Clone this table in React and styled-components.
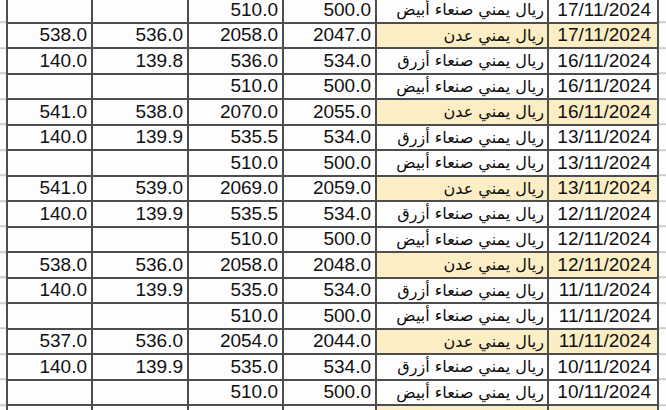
import React from "react";
import styled, { createGlobalStyle } from "styled-components";

const GlobalStyle = createGlobalStyle`
  html, body {
    margin: 0;
    padding: 0;
    width: 666px;
    height: 410px;
    overflow: hidden;
    background-color: #fdfdfd;
    background-image: repeating-linear-gradient(
      to bottom,
      transparent 0,
      transparent 23.5px,
      #cfcfcf 23.5px,
      #cfcfcf 25.5px
    );
    background-position: 0 -1.8px;
  }
`;

const Page = styled.div`
  padding-left: 6px;
  margin-top: -3.8px;
`;

const Sheet = styled.div`
  display: grid;
  grid-template-columns: 83px 94px 93px 91px 170px 108px;
  grid-auto-rows: 23.5px;
  gap: 2px;
  padding: 2px;
  width: max-content;
  background: #4d4d4d;
`;

const Cell = styled.div`
  display: flex;
  align-items: center;
  justify-content: flex-end;
  padding-right: ${(p) => p.$pad || 4}px;
  background: ${(p) => (p.$yellow ? "#fbedc4" : "#fdfdfd")};
  color: #111;
  font-family: "Liberation Sans", Arial, sans-serif;
  font-size: 19px;
  white-space: nowrap;
  overflow: hidden;
`;

const NameCell = styled(Cell)`
  direction: rtl;
  justify-content: flex-start;
  padding-right: 3px;
  font-family: "DejaVu Sans", sans-serif;
  font-size: 16px;
  color: #0c0c0c;
`;

const WHITE = "ريال يمني صنعاء أبيض";
const ADEN = "ريال يمني عدن";
const BLUE = "ريال يمني صنعاء أزرق";

const rows = [
  { date: "17/11/2024", name: WHITE, d: "500.0", c: "510.0" },
  { date: "17/11/2024", name: ADEN, d: "2047.0", c: "2058.0", b: "536.0", a: "538.0" },
  { date: "16/11/2024", name: BLUE, d: "534.0", c: "536.0", b: "139.8", a: "140.0" },
  { date: "16/11/2024", name: WHITE, d: "500.0", c: "510.0" },
  { date: "16/11/2024", name: ADEN, d: "2055.0", c: "2070.0", b: "538.0", a: "541.0" },
  { date: "13/11/2024", name: BLUE, d: "534.0", c: "535.5", b: "139.9", a: "140.0" },
  { date: "13/11/2024", name: WHITE, d: "500.0", c: "510.0" },
  { date: "13/11/2024", name: ADEN, d: "2059.0", c: "2069.0", b: "539.0", a: "541.0" },
  { date: "12/11/2024", name: BLUE, d: "534.0", c: "535.5", b: "139.9", a: "140.0" },
  { date: "12/11/2024", name: WHITE, d: "500.0", c: "510.0" },
  { date: "12/11/2024", name: ADEN, d: "2048.0", c: "2058.0", b: "536.0", a: "538.0" },
  { date: "11/11/2024", name: BLUE, d: "534.0", c: "535.0", b: "139.9", a: "140.0" },
  { date: "11/11/2024", name: WHITE, d: "500.0", c: "510.0" },
  { date: "11/11/2024", name: ADEN, d: "2044.0", c: "2054.0", b: "536.0", a: "537.0" },
  { date: "10/11/2024", name: BLUE, d: "534.0", c: "535.0", b: "139.9", a: "140.0" },
  { date: "10/11/2024", name: WHITE, d: "500.0", c: "510.0" },
  // next row is cut by the bottom edge, only its fill shows
  { aden: true },
];

export default function App() {
  return (
    <>
      <GlobalStyle />
      <Page>
        <Sheet>
          {rows.map((r, i) => {
            const aden = r.aden || r.name === ADEN;
            return (
              <React.Fragment key={i}>
                <Cell>{r.a}</Cell>
                <Cell>{r.b}</Cell>
                <Cell>{r.c}</Cell>
                <Cell>{r.d}</Cell>
                <NameCell $yellow={aden}>{r.name}</NameCell>
                <Cell $yellow={aden} $pad={6}>{r.date}</Cell>
              </React.Fragment>
            );
          })}
        </Sheet>
      </Page>
    </>
  );
}
